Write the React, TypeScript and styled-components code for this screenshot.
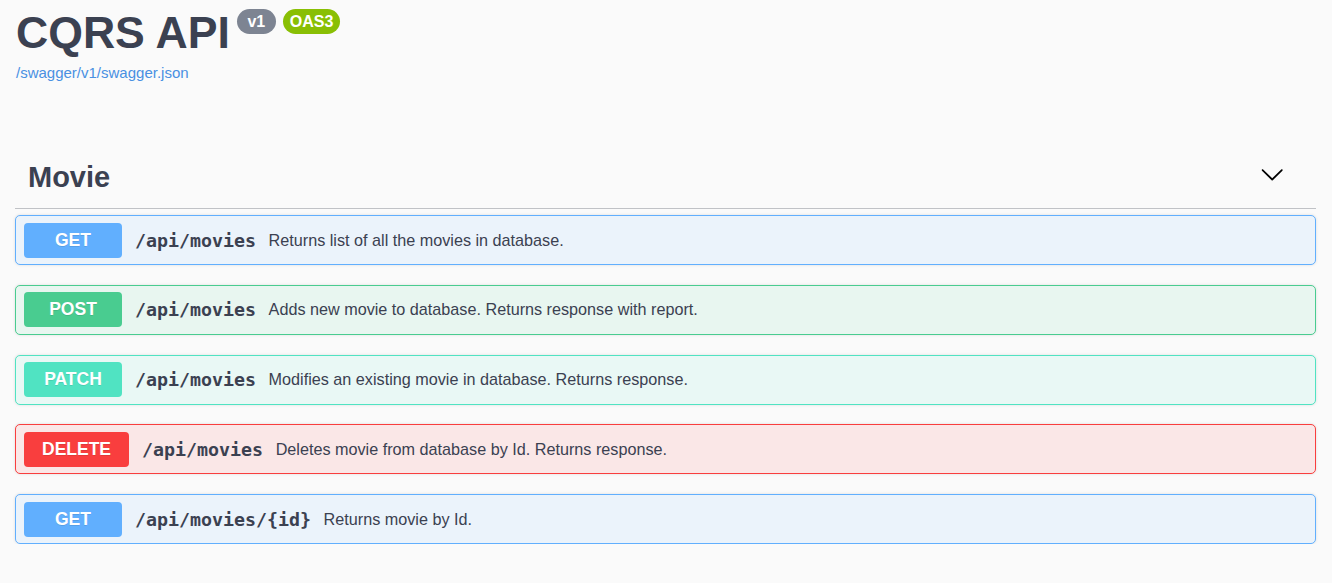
import React from "react";
import styled, { createGlobalStyle } from "styled-components";

const GlobalStyle = createGlobalStyle`
  html, body { margin: 0; padding: 0; background: #fafafa; }
  body { font-family: "Liberation Sans", Arial, sans-serif; color: #3b4151; }
`;

const Page = styled.div`
  padding: 7px 16px 0 15px;
`;

const Info = styled.div`
  display: flex;
  flex-direction: column;
  align-items: flex-start;
`;

const TitleRow = styled.div`
  display: flex;
  align-items: flex-start;
  padding-left: 1px;
`;

const Title = styled.h2`
  margin: 0;
  font-size: 44.6px;
  line-height: 51px;
  font-weight: 700;
  color: #3b4151;
`;

const Badges = styled.div`
  display: flex;
  gap: 7px;
  margin: 2px 0 0 7px;
`;

const Badge = styled.span<{ $bg: string; $pad: number }>`
  display: flex;
  align-items: center;
  height: 25px;
  padding: 0 ${(p) => p.$pad}px;
  border-radius: 57px;
  background: ${(p) => p.$bg};
  color: #fff;
  font-size: 16px;
  font-weight: 700;
`;

const SpecLink = styled.a`
  margin: 6px 0 0 1px;
  font-size: 15px;
  line-height: 17px;
  color: #4990e2;
  text-decoration: none;
`;

const TagSection = styled.section`
  margin-top: 65px;
`;

const TagHeader = styled.div`
  display: flex;
  align-items: center;
  justify-content: space-between;
  padding: 14px 32px 14px 13px;
  border-bottom: 1px solid rgba(59, 65, 81, 0.3);
`;

const TagTitle = styled.h3`
  margin: 0;
  font-size: 29px;
  line-height: 34px;
  font-weight: 700;
  color: #3b4151;
`;

const Arrow = styled.svg`
  width: 24.4px;
  height: 24.4px;
  margin-bottom: 6px;
  flex: none;
`;

const OpList = styled.div`
  display: flex;
  flex-direction: column;
  gap: 19.75px;
  margin-top: 6px;
`;

const Opblock = styled.div<{ $color: string; $bg: string }>`
  display: flex;
  align-items: center;
  box-sizing: border-box;
  height: 50px;
  padding: 0 8px;
  border: 1px solid ${(p) => p.$color};
  border-radius: 5px;
  background: ${(p) => p.$bg};
  box-shadow: 0 0 3px rgba(0, 0, 0, 0.12);
`;

const Method = styled.span<{ $color: string }>`
  display: flex;
  align-items: center;
  justify-content: center;
  box-sizing: border-box;
  min-width: 98px;
  height: 35px;
  padding: 0 18px;
  border-radius: 4px;
  background: ${(p) => p.$color};
  color: #fff;
  font-size: 17.5px;
  font-weight: 700;
  text-shadow: 0 1px 0 rgba(0, 0, 0, 0.1);
`;

const Path = styled.span`
  padding: 0 12.5px 0 13px;
  font-family: "DejaVu Sans Mono", "Liberation Mono", monospace;
  font-size: 18.3px;
  font-weight: 700;
  color: #3b4151;
`;

const Desc = styled.span`
  font-size: 16.2px;
  color: #3b4151;
`;

const METHODS: Record<string, { color: string; bg: string }> = {
  GET: { color: "#61affe", bg: "#ebf3fb" },
  POST: { color: "#49cc90", bg: "#e8f6f0" },
  PATCH: { color: "#50e3c2", bg: "#e9f8f5" },
  DELETE: { color: "#f93e3e", bg: "#fae7e7" },
};

const ops = [
  { method: "GET", path: "/api/movies", desc: "Returns list of all the movies in database." },
  { method: "POST", path: "/api/movies", desc: "Adds new movie to database. Returns response with report." },
  { method: "PATCH", path: "/api/movies", desc: "Modifies an existing movie in database. Returns response." },
  { method: "DELETE", path: "/api/movies", desc: "Deletes movie from database by Id. Returns response." },
  { method: "GET", path: "/api/movies/{id}", desc: "Returns movie by Id." },
];

export default function App() {
  return (
    <>
      <GlobalStyle />
      <Page>
        <Info>
          <TitleRow>
            <Title>CQRS API</Title>
            <Badges>
              <Badge $bg="#7d8492" $pad={10.5}>v1</Badge>
              <Badge $bg="#89bf04" $pad={7}>OAS3</Badge>
            </Badges>
          </TitleRow>
          <SpecLink href="#">/swagger/v1/swagger.json</SpecLink>
        </Info>
        <TagSection>
          <TagHeader>
            <TagTitle>Movie</TagTitle>
            <Arrow viewBox="0 0 20 20">
              <path
                fill="#000"
                d="M17.418 6.109c.272-.268.709-.268.979 0s.271.701 0 .969l-7.908 7.83c-.27.268-.707.268-.979 0l-7.908-7.83c-.27-.268-.27-.701 0-.969.271-.268.709-.268.979 0L10 13.25l7.418-7.141z"
              />
            </Arrow>
          </TagHeader>
          <OpList>
            {ops.map((op, i) => {
              const m = METHODS[op.method];
              return (
                <Opblock key={i} $color={m.color} $bg={m.bg}>
                  <Method $color={m.color}>{op.method}</Method>
                  <Path>{op.path}</Path>
                  <Desc>{op.desc}</Desc>
                </Opblock>
              );
            })}
          </OpList>
        </TagSection>
      </Page>
    </>
  );
}
